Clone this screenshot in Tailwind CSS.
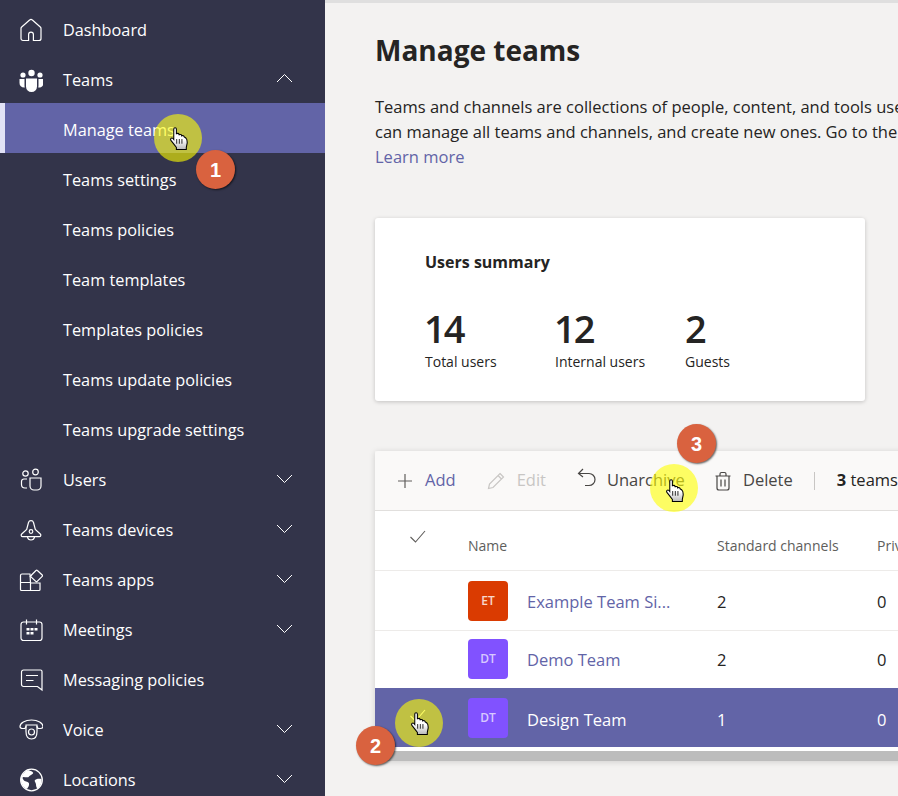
<!DOCTYPE html>
<html lang="en">

<head>
    <meta charset="UTF-8">
    <title>Manage teams</title>
    <script src="https://cdn.jsdelivr.net/npm/@tailwindcss/browser@4"></script>
</head>

<body class="relative w-[898px] h-[796px] overflow-hidden flex bg-[#f3f2f1] font-['Open_Sans',sans-serif] text-[16.5px] text-[#252423]">

    <!-- Sidebar -->
    <nav class="w-[325px] h-full shrink-0 bg-[#33344a] pt-[3px] text-white text-[16.3px] overflow-hidden">
        <a class="flex items-center h-[50px] pt-1 pl-[19px]">
            <svg class="w-6 h-6 mr-5 -mt-px" viewBox="0 0 24 24" fill="none" stroke="#fff" stroke-width="1.2"><path d="M9.6 22.5H4a2 2 0 0 1-2-2V10.5a2 2 0 0 1 .7-1.5L10.6 2a2 2 0 0 1 2.8 0L21.300 9a2 2 0 0 1 .7 1.500V20.500a2 2 0 0 1-2 2H14.400V16.500a2.400 2.400 0 0 0-4.800 0z"/></svg>
            <span>Dashboard</span>
        </a>
        <a class="flex items-center h-[50px] pt-1 pl-[19px]">
            <svg class="w-6 h-6 mr-5" viewBox="0 0 24 24" fill="#fff"><circle cx="12.500" cy="5" r="3.200"/><circle cx="4" cy="7" r="2.600"/><circle cx="21" cy="7" r="2.600"/><path d="M7 10.500h11v8a5.500 5.500 0 0 1-11 0z"/><path d="M.5 11h5v6.500c0 .8.100 1.300.3 2-3 .3-5.300-1.500-5.300-4.500zM19.500 11h5v4c0 3-2.300 4.800-5.300 4.500.2-.7.300-1.200.3-2z"/></svg>
            <span>Teams</span>
            <svg class="w-[17px] h-[17px] ml-auto mr-[32px] -mt-1" viewBox="0 0 17 17" fill="none" stroke="#fff" stroke-width="1"><path d="M1 12L8.500 4.500 16 12"/></svg>
        </a>
        <a class="flex items-center h-[50px] pt-1 pl-[58px] bg-[#6264a7] border-l-[5px] border-[#e2e2f6]">Manage teams</a>
        <a class="flex items-center h-[50px] pt-1 pl-[63px]">Teams settings</a>
        <a class="flex items-center h-[50px] pt-1 pl-[63px]">Teams policies</a>
        <a class="flex items-center h-[50px] pt-1 pl-[63px]">Team templates</a>
        <a class="flex items-center h-[50px] pt-1 pl-[63px]">Templates policies</a>
        <a class="flex items-center h-[50px] pt-1 pl-[63px]">Teams update policies</a>
        <a class="flex items-center h-[50px] pt-1 pl-[63px]">Teams upgrade settings</a>
        <a class="flex items-center h-[50px] pt-1 pl-[19px]">
            <svg class="w-6 h-6 mr-5" viewBox="0 0 24 24" fill="none" stroke="#fff" stroke-width="1.200"><circle cx="6.500" cy="5.500" r="2.700"/><circle cx="16.500" cy="4" r="2.800"/><path d="M8 11H5a2.500 2.500 0 0 0-2.500 2.500v3A3.500 3.500 0 0 0 6 20h2"/><path d="M11 10h11v8a4 4 0 0 1-4 4h-3a4 4 0 0 1-4-4z"/></svg>
            <span>Users</span>
            <svg class="w-[17px] h-[17px] ml-auto mr-[32px] -mt-1" viewBox="0 0 17 17" fill="none" stroke="#fff" stroke-width="1"><path d="M1 5l7.500 7.500L16 5"/></svg>
        </a>
        <a class="flex items-center h-[50px] pt-1 pl-[19px]">
            <svg class="w-6 h-6 mr-5" viewBox="0 0 24 24" fill="none" stroke="#fff" stroke-width="1.200"><path d="M9.500 4.500a2.600 2.600 0 0 1 5 0l1.800 7 5 4.500c1 1 .5 2.700-1 2.700H3.700c-1.500 0-2-1.700-1-2.700l5-4.500z"/><circle cx="12" cy="13.500" r="1.800"/><path d="M8.500 19c.3 2 1.800 3 3.500 3s3.200-1 3.500-3"/></svg>
            <span>Teams devices</span>
            <svg class="w-[17px] h-[17px] ml-auto mr-[32px] -mt-1" viewBox="0 0 17 17" fill="none" stroke="#fff" stroke-width="1"><path d="M1 5l7.500 7.500L16 5"/></svg>
        </a>
        <a class="flex items-center h-[50px] pt-1 pl-[19px]">
            <svg class="w-6 h-6 mr-5" viewBox="0 0 24 24" fill="none" stroke="#fff" stroke-width="1.200"><path d="M11 6H3a1.500 1.500 0 0 0-1.500 1.500v14a1 1 0 0 0 1 1H20a1 1 0 0 0 1-1V15H11.500zM1.500 14.500h10v8"/><path d="M11.500 8l5.500-5.500a1 1 0 0 1 1.400 0l4.800 4.500a1 1 0 0 1 0 1.400l-5 5a1 1 0 0 1-1.400 0l-4.800-4.500a.8.800 0 0 1 0-.9z"/></svg>
            <span>Teams apps</span>
            <svg class="w-[17px] h-[17px] ml-auto mr-[32px] -mt-1" viewBox="0 0 17 17" fill="none" stroke="#fff" stroke-width="1"><path d="M1 5l7.500 7.500L16 5"/></svg>
        </a>
        <a class="flex items-center h-[50px] pt-1 pl-[19px]">
            <svg class="w-6 h-6 mr-5" viewBox="0 0 24 24" fill="none" stroke="#fff" stroke-width="1.200"><rect x="2" y="4" width="21" height="18.500" rx="2.500"/><path d="M7.500 1.500v5M17.500 1.500v5"/><path fill="#fff" stroke="none" d="M7.500 10h3v2.500h-3zM11.500 10h3v2.500h-3zM15.500 10h3v2.500h-3zM7.500 14h3v2.500h-3zM11.500 14h3v2.500h-3z"/></svg>
            <span>Meetings</span>
            <svg class="w-[17px] h-[17px] ml-auto mr-[32px] -mt-1" viewBox="0 0 17 17" fill="none" stroke="#fff" stroke-width="1"><path d="M1 5l7.500 7.500L16 5"/></svg>
        </a>
        <a class="flex items-center h-[50px] pt-1 pl-[19px]">
            <svg class="w-6 h-6 mr-5" viewBox="0 0 24 24" fill="none" stroke="#fff" stroke-width="1.200"><path d="M4.500 2h17a1.500 1.500 0 0 1 1.500 1.500V22l-4.500-3.500H4.500A2 2 0 0 1 2.500 16.500V4a2 2 0 0 1 2-2z"/><path d="M7 7.500h12M7 12.500h7.500"/></svg>
            <span>Messaging policies</span>
        </a>
        <a class="flex items-center h-[50px] pt-1 pl-[19px]">
            <svg class="w-6 h-6 mr-5" viewBox="0 0 24 24" fill="none" stroke="#fff" stroke-width="1.200"><path d="M1 8.500C1 5 6 2 12.500 2S24 5 24 8.500c0 1.500-1 2-2.500 2h-1.500c-1.500 0-2-1-2-2.500v-1H7v1c0 1.500-.5 2.500-2 2.500H3.500C2 10.500 1 10 1 8.500z"/><path d="M7 8v5.500c0 5 2 7.500 5.500 7.500s5.500-2.500 5.500-7.500V8"/><circle cx="12.500" cy="14" r="3"/></svg>
            <span>Voice</span>
            <svg class="w-[17px] h-[17px] ml-auto mr-[32px] -mt-1" viewBox="0 0 17 17" fill="none" stroke="#fff" stroke-width="1"><path d="M1 5l7.500 7.500L16 5"/></svg>
        </a>
        <a class="flex items-center h-[50px] pt-1 pl-[19px]">
            <svg class="w-6 h-6 mr-5" viewBox="0 0 24 24" fill="none" stroke="#fff" stroke-width="1.300"><circle cx="12.500" cy="12" r="10.800"/><path fill="#fff" stroke="none" d="M9 2c1.500 1 4 1 5 2.500S11 7 10 8.500 6 9 4.500 9 3.500 11 5 12.500s4.500 1 5 3-1 4-2 5.500c-3-1-6-5-6-9s3-8 7-10zM16 12c2-1.500 4-1.500 6.500-1 .5 3-1 7.500-3.500 9.500-1 .5-2-2-2-4s-2-3-1-4.500z"/></svg>
            <span>Locations</span>
            <svg class="w-[17px] h-[17px] ml-auto mr-[32px] -mt-1" viewBox="0 0 17 17" fill="none" stroke="#fff" stroke-width="1"><path d="M1 5l7.500 7.500L16 5"/></svg>
        </a>
    </nav>

    <!-- Main -->
    <main class="flex-1 min-w-0 h-full overflow-hidden border-t-[3px] border-[#dfdfdf] pl-[50px]">
        <h1 class="mt-[27px] text-[28px] leading-10 font-bold">Manage teams</h1>
        <div class="mt-[24px] leading-[25px] whitespace-nowrap">
            <p>Teams and channels are collections of people, content, and tools used for projects</p>
            <p>can manage all teams and channels, and create new ones. Go to the Teams</p>
            <a class="text-[#6264a7]">Learn more</a>
        </div>

        <section class="mt-[49px] w-[490px] h-[183px] bg-white rounded-[3px] shadow-[0_1px_4px_rgba(0,0,0,0.2)] pt-[32px] pl-[50px]">
            <h2 class="font-bold text-[16px] leading-6">Users summary</h2>
            <div class="flex mt-[30px]">
                <div class="w-[130px]">
                    <p class="text-[38px] leading-[48px] font-semibold tracking-[-2px] -ml-px">14</p>
                    <p class="text-[14px] leading-5">Total users</p>
                </div>
                <div class="w-[130px]">
                    <p class="text-[38px] leading-[48px] font-semibold tracking-[-2px] -ml-px">12</p>
                    <p class="text-[14px] leading-5">Internal users</p>
                </div>
                <div>
                    <p class="text-[38px] leading-[48px] font-semibold tracking-[-2px]">2</p>
                    <p class="text-[14px] leading-5">Guests</p>
                </div>
            </div>
        </section>

        <section class="mt-[50px] w-[620px] shadow-[0_1px_6px_rgba(0,0,0,0.15)]">
            <div class="flex items-center h-[60px] bg-[#faf9f8] rounded-t-[3px] border-b border-[#e1dfdd] pl-[21px] whitespace-nowrap">
                <svg class="w-[18px] h-[18px] mr-[11px]" viewBox="0 0 18 18" fill="none" stroke="#605e5c" stroke-width="1.200"><path d="M9 2v14M2 9h14"/></svg>
                <span class="text-[#6264a7] mr-[30px]">Add</span>
                <svg class="w-[20px] h-[20px] mr-[11px]" viewBox="0 0 20 20" fill="none" stroke="#c8c6c4" stroke-width="1.200"><path d="M14 2.500l3.500 3.500L7 16.500l-4.500 1 1-4.500zM12 4.500l3.500 3.500"/></svg>
                <span class="text-[#c8c6c4] mr-[31px]">Edit</span>
                <svg class="w-[20px] h-[20px] mr-[10px] -mt-2" viewBox="0 0 20 20" fill="none" stroke="#484644" stroke-width="1.200"><path d="M6 2L1.500 6.500 6 10M2 6.500h10a6 6 0 0 1 0 12H8"/></svg>
                <span class="text-[#484644] w-[107px]">Unarchive</span>
                <svg class="w-[18px] h-[20px] mr-[11px]" viewBox="0 0 18 20" fill="none" stroke="#484644" stroke-width="1.200"><path d="M1.500 5h15M6 5V3a1.500 1.500 0 0 1 1.500-1.500h3A1.500 1.500 0 0 1 12 3v2M3 5v12a2 2 0 0 0 2 2h8a2 2 0 0 0 2-2V5M7 8.500v7M11 8.500v7"/></svg>
                <span class="text-[#484644]">Delete</span>
                <span class="w-px h-[18px] bg-[#c8c6c4] ml-[21px] mr-[22px]"></span>
                <span><b>3</b> teams selected</span>
            </div>

            <div class="flex items-center h-[60px] bg-white border-b border-[#edebe9] text-[14px] text-[#605e5c] whitespace-nowrap">
                <div class="w-[93px] pl-[34px]">
                    <svg class="w-[17px] h-[17px] -mt-2" viewBox="0 0 17 17" fill="none" stroke="#605e5c" stroke-width="1.100"><path d="M1.500 9l5 5L16 3"/></svg>
                </div>
                <div class="w-[249px] pt-[10px]">Name</div>
                <div class="w-[160px] pt-[10px]">Standard channels</div>
                <div class="pt-[10px]">Private channels</div>
            </div>

            <div class="flex items-center h-[60px] bg-white border-b border-[#edebe9] whitespace-nowrap">
                <div class="w-[93px]"></div>
                <div class="w-[249px] flex items-center text-[#6264a7]">
                    <span class="w-10 h-10 mr-[19px] rounded-[4px] bg-[#da3b01] text-white/80 text-[12px] font-semibold flex items-center justify-center">ET</span>
                    <span class="pt-1">Example Team Si...</span>
                </div>
                <div class="w-[160px] pt-1">2</div>
                <div class="pt-1">0</div>
            </div>

            <div class="flex items-center h-[57px] bg-white whitespace-nowrap">
                <div class="w-[93px]"></div>
                <div class="w-[249px] flex items-center text-[#6264a7]">
                    <span class="w-10 h-10 mr-[19px] -mt-[2px] rounded-[4px] bg-[#8152ff] text-white/70 text-[12px] font-semibold flex items-center justify-center">DT</span>
                    <span class="pt-[2px]">Demo Team</span>
                </div>
                <div class="w-[160px] pt-[2px]">2</div>
                <div class="pt-[2px]">0</div>
            </div>

            <div class="flex items-center h-[59px] bg-[#6264a7] text-white whitespace-nowrap">
                <div class="w-[93px] pl-[34px]">
                    <svg class="w-[17px] h-[17px] -mt-1" viewBox="0 0 17 17" fill="none" stroke="#fff" stroke-width="1.100"><path d="M1.500 9l5 5L16 3"/></svg>
                </div>
                <div class="w-[249px] flex items-center">
                    <span class="w-10 h-10 mr-[19px] rounded-[4px] bg-[#8152ff] text-white/70 text-[12px] font-semibold flex items-center justify-center">DT</span>
                    <span class="pt-[6px]">Design Team</span>
                </div>
                <div class="w-[160px] pt-[6px]">1</div>
                <div class="pt-[6px]">0</div>
            </div>

            <div class="bg-white pt-[4px]">
                <div class="h-[10px] bg-[#bcbcbc]"></div>
            </div>
        </section>
    </main>

    <!-- Click annotations -->
    <span class="absolute left-[154px] top-[114px] w-[48px] h-[48px] rounded-full bg-[#ffff00]/60"></span>
    <span class="absolute left-[395px] top-[699px] w-[48px] h-[48px] rounded-full bg-[#ffff00]/60"></span>
    <span class="absolute left-[650px] top-[464px] w-[48px] h-[48px] rounded-full bg-[#ffff00]/60"></span>

    <svg class="absolute left-[170px] top-[127px] w-[18px] h-[23px]" viewBox="0 0 17 22"><defs><linearGradient id="hand" x1="0" y1="0" x2="0" y2="1"><stop offset="0.55" stop-color="#fff"/><stop offset="1" stop-color="#b8b8b8"/></linearGradient></defs><path fill="url(#hand)" stroke="#000" stroke-width="1" d="M3.500 1.800C3.500 .3 6 .3 6 1.800V7C6 5.800 8.500 5.800 8.500 7V8C8.500 6.800 11 6.800 11 8V9C11 7.900 13.300 7.900 13.300 9.200L15 10.500C16 11.500 16.500 13 16.300 15.500L15.500 19.500V21.500H6V19.500L.8 12.800C-.2 11.300 1.500 9.800 2.700 11L3.500 12z"/><path stroke="#000" stroke-width=".8" d="M6.300 11.500v4.500M8.800 11.500v4.500M11.300 11.500v4.500"/></svg>
    <svg class="absolute left-[411px] top-[712px] w-[18px] h-[23px]" viewBox="0 0 17 22"><path fill="url(#hand)" stroke="#000" stroke-width="1" d="M3.500 1.800C3.500 .3 6 .3 6 1.800V7C6 5.800 8.500 5.800 8.500 7V8C8.500 6.800 11 6.800 11 8V9C11 7.900 13.300 7.900 13.300 9.200L15 10.500C16 11.500 16.500 13 16.300 15.500L15.500 19.500V21.500H6V19.500L.8 12.800C-.2 11.300 1.500 9.800 2.700 11L3.500 12z"/><path stroke="#000" stroke-width=".8" d="M6.300 11.500v4.500M8.800 11.500v4.500M11.300 11.500v4.500"/></svg>
    <svg class="absolute left-[666px] top-[479px] w-[18px] h-[23px]" viewBox="0 0 17 22"><path fill="url(#hand)" stroke="#000" stroke-width="1" d="M3.500 1.800C3.500 .3 6 .3 6 1.800V7C6 5.800 8.500 5.800 8.500 7V8C8.500 6.800 11 6.800 11 8V9C11 7.900 13.300 7.900 13.300 9.200L15 10.500C16 11.500 16.500 13 16.300 15.500L15.500 19.500V21.500H6V19.500L.8 12.800C-.2 11.300 1.500 9.800 2.700 11L3.500 12z"/><path stroke="#000" stroke-width=".8" d="M6.300 11.500v4.500M8.800 11.500v4.500M11.300 11.500v4.500"/></svg>

    <span class="absolute left-[196px] top-[150px] w-[39px] h-[39px] rounded-full bg-[#d9623f] shadow-[1px_1px_2px_rgba(0,0,0,0.6)] text-white font-['Liberation_Sans',sans-serif] font-bold text-[20px] flex items-center justify-center">1</span>
    <span class="absolute left-[356px] top-[726px] w-[39px] h-[39px] rounded-full bg-[#d9623f] shadow-[1px_1px_2px_rgba(0,0,0,0.6)] text-white font-['Liberation_Sans',sans-serif] font-bold text-[20px] flex items-center justify-center">2</span>
    <span class="absolute left-[677px] top-[424px] w-[39px] h-[39px] rounded-full bg-[#d9623f] shadow-[1px_1px_2px_rgba(0,0,0,0.6)] text-white font-['Liberation_Sans',sans-serif] font-bold text-[20px] flex items-center justify-center">3</span>

</body>

</html>
